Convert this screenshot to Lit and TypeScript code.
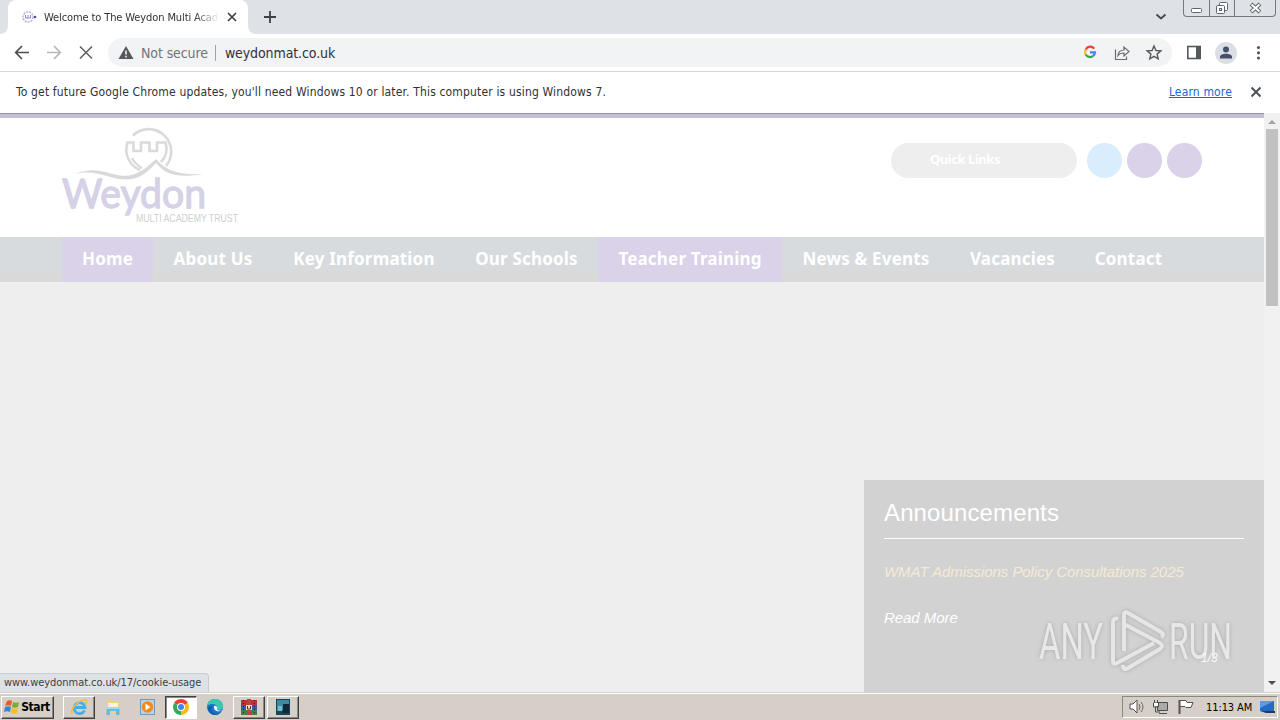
import { LitElement, html, css, svg } from 'lit';
import { customElement } from 'lit/decorators.js';
import { classMap } from 'lit/directives/class-map.js';
import { styleMap } from 'lit/directives/style-map.js';

const chromeLogo = svg`
  <circle cx="10" cy="10" r="8" fill="#fff"/>
  <path d="M10 10 3.100 6A8 8 0 0 1 16.900 6Z" fill="#ea4335"/>
  <path d="M10 10 16.900 6A8 8 0 0 1 10 18Z" fill="#fbbc04"/>
  <path d="M10 10 10 18A8 8 0 0 1 3.100 6Z" fill="#34a853"/>
  <circle cx="10" cy="10" r="4" fill="#fff"/>
  <circle cx="10" cy="10" r="3" fill="#4285f4"/>`;

@customElement('browser-chrome')
export class BrowserChrome extends LitElement {
  static styles = css`
    :host {
      display: block;
      font-family: "DejaVu Sans Condensed", "DejaVu Sans", sans-serif;
      font-stretch: condensed;
      color: #303134;
    }
    svg {
      display: block;
      fill: none;
      flex: none;
    }
    .tabs {
      display: flex;
      height: 34px;
      background: #dee1e6;
      align-items: flex-start;
    }
    .corner {
      width: 8px;
      height: 34px;
      background: #fff;
    }
    .corner div {
      height: 34px;
      background: #dee1e6;
    }
    .corner.left div {
      border-bottom-right-radius: 8px;
    }
    .corner.right div {
      border-bottom-left-radius: 8px;
    }
    .tab {
      box-sizing: border-box;
      width: 240px;
      height: 34px;
      padding: 0 8px 0 14px;
      display: flex;
      align-items: center;
      background: #fff;
      border-radius: 8px 8px 0 0;
    }
    .title {
      width: 175px;
      margin-left: 6px;
      overflow: hidden;
      white-space: nowrap;
      font-size: 11px;
      letter-spacing: -0.11px;
      -webkit-mask-image: linear-gradient(90deg, #000 150px, transparent 175px);
      mask-image: linear-gradient(90deg, #000 150px, transparent 175px);
    }
    .tab .close {
      margin-left: 5px;
    }
    .plus {
      margin: 11px 0 0 7px;
    }
    .chevron {
      margin: 13px 16px 0 auto;
    }
    .window {
      box-sizing: border-box;
      display: flex;
      width: 93px;
      height: 17px;
      margin-right: 4px;
      border: 1px solid #75797f;
      border-top: 0;
      border-radius: 0 0 4px 4px;
      overflow: hidden;
    }
    .window svg + svg {
      border-left: 1px solid #75797f;
    }
    .toolbar {
      box-sizing: border-box;
      display: flex;
      align-items: center;
      height: 38px;
      padding: 0 12px;
      background: #fff;
      border-bottom: 1px solid #d5d7da;
    }
    .toolbar > svg + svg {
      margin-left: 12px;
    }
    .toolbar > .panel + svg,
    .toolbar > .avatar + svg {
      margin-left: 11px;
    }
    .omnibox {
      box-sizing: border-box;
      flex: 1;
      display: flex;
      align-items: center;
      height: 29px;
      margin: 0 12px;
      padding: 0 8px;
      background: #f1f3f4;
      border-radius: 15px;
      font-size: 14px;
    }
    .omnibox .state {
      margin-left: 5px;
      color: #70757a;
      letter-spacing: -0.1px;
      white-space: nowrap;
    }
    .omnibox .bar {
      width: 1px;
      height: 16px;
      margin: 0 9px 0 7px;
      background: #a0a3a7;
    }
    .omnibox .url {
      flex: 1;
      letter-spacing: -0.1px;
    }
    .tools {
      display: flex;
      gap: 12px;
    }
    .infobar {
      box-sizing: border-box;
      display: flex;
      align-items: center;
      height: 41px;
      padding: 0 16px 2px;
      background: #fff;
      font-size: 12px;
      letter-spacing: 0.16px;
    }
    .infobar span {
      flex: 1;
    }
    .infobar a {
      color: #1967d2;
      text-decoration: underline;
      margin-right: 16px;
    }
  `;

  render() {
    return html`
      <div class="tabs">
        <div class="corner left"><div></div></div>
        <div class="tab">
          <svg width="16" height="16">
            <circle cx="6" cy="8" r="5" stroke="#b7b2dc" stroke-width="1.500" stroke-dasharray="2 1"/>
            <path d="M3.500 6v3h5V6M6 6v3" stroke="#8d87c8"/>
            <circle cx="13" cy="8" r="1.300" fill="#5347a0"/>
          </svg>
          <div class="title">Welcome to The Weydon Multi Academy Trust</div>
          <svg class="close" width="16" height="16"><path d="m4 4 8 8m0-8-8 8" stroke="#3c4043" stroke-width="1.700"/></svg>
        </div>
        <div class="corner right"><div></div></div>
        <svg class="plus" width="14" height="12"><path d="M7 0v12M1 6h12" stroke="#3c4043" stroke-width="1.800"/></svg>
        <svg class="chevron" width="12" height="8"><path d="m1.500 1.500 4.500 4 4.500-4" stroke="#45484d" stroke-width="1.800"/></svg>
        <div class="window">
          <svg width="25" height="17"><rect x="7.500" y="8.500" width="10" height="4" rx="1" fill="#fff" stroke="#606469"/></svg>
          <svg width="24" height="17">
            <rect x="9.500" y="2.500" width="8" height="8" rx="1" fill="#fff" stroke="#606469"/>
            <rect x="6.500" y="5.500" width="8" height="8" rx="1" fill="#fff" stroke="#606469"/>
            <rect x="9.500" y="8.500" width="2" height="2" stroke="#606469"/>
          </svg>
          <svg width="41" height="17">
            <path d="m16 4 9 8m0-8-9 8" stroke="#606469" stroke-width="4"/>
            <path d="m16.500 4.500 8 7m0-7-8 7" stroke="#fff" stroke-width="2"/>
          </svg>
        </div>
      </div>
      <div class="toolbar">
        <svg width="20" height="20"><path d="M17 9.500H4m6-6.500L3.700 9.500 10 16" stroke="#4b4e52" stroke-width="1.700"/></svg>
        <svg width="20" height="20"><path d="M3 9.500h13M10 3l6.300 6.500L10 16" stroke="#b5b7ba" stroke-width="1.700"/></svg>
        <svg width="20" height="20"><path d="m4 3.500 12 12m0-12-12 12" stroke="#5f6368" stroke-width="1.600"/></svg>
        <div class="omnibox">
          <svg width="20" height="18"><path d="M10 2 17.500 15h-15Z" fill="#55585d"/><path d="M10 6.500v4m0 1.300v1.700" stroke="#f1f3f4" stroke-width="1.600"/></svg>
          <span class="state">Not secure</span>
          <div class="bar"></div>
          <span class="url">weydonmat.co.uk</span>
          <div class="tools">
            <svg width="20" height="20">
              <g stroke-width="2.200">
                <path d="M14.200 5.600A5 5 0 0 0 5.700 6.600" stroke="#ea4335"/>
                <path d="M5.700 6.600a5 5 0 0 0 0 5" stroke="#fbbc04"/>
                <path d="M5.700 11.500a5 5 0 0 0 7.500 1.400" stroke="#34a853"/>
                <path d="M13.200 12.900A5 5 0 0 0 15 9.300H10" stroke="#4285f4"/>
              </g>
            </svg>
            <svg width="20" height="20"><path d="M3.500 6.500v10h11v-3M6 12.500c.4-4 3-5.500 6-5.500V4l5 4.500-5 4.500v-3c-3 0-4.700.7-6 2.500Z" stroke="#686c70" stroke-width="1.200"/></svg>
            <svg width="20" height="20"><path d="m10 3 1.900 4.500 4.900.4-3.700 3.200 1.100 4.800L10 13.400l-4.200 2.500 1.100-4.800-3.700-3.200 4.900-.4Z" stroke="#55595e" stroke-width="1.400"/></svg>
          </div>
        </div>
        <svg class="panel" width="20" height="20"><rect x="3.800" y="3.500" width="12.400" height="12" stroke="#55585d" stroke-width="1.600"/><path d="M12 3.500h4.500v12H12Z" fill="#55585d"/></svg>
        <svg class="avatar" width="22" height="22"><circle cx="11" cy="11" r="11" fill="#dbdfe5"/><circle cx="11" cy="7.600" r="3" fill="#44506a"/><path d="M5 16.500v-1.800c0-4 12-4 12 0v1.800Z" fill="#44506a"/></svg>
        <svg width="20" height="20"><g fill="#55585d"><circle cx="10.500" cy="4.500" r="1.600"/><circle cx="10.500" cy="9.800" r="1.600"/><circle cx="10.500" cy="15" r="1.600"/></g></svg>
      </div>
      <div class="infobar">
        <span>To get future Google Chrome updates, you'll need Windows 10 or later. This computer is using Windows 7.</span>
        <a>Learn more</a>
        <svg width="16" height="16"><path d="m3.500 3.500 9 9m0-9-9 9" stroke="#4b4e52" stroke-width="1.900"/></svg>
      </div>
    `;
  }
}

@customElement('school-site')
export class SchoolSite extends LitElement {
  menu = [
    { label: 'Home', width: 91, lilac: true },
    { label: 'About Us', width: 120 },
    { label: 'Key Information', width: 182 },
    { label: 'Our Schools', width: 143 },
    { label: 'Teacher Training', width: 184, lilac: true },
    { label: 'News & Events', width: 168 },
    { label: 'Vacancies', width: 125 },
    { label: 'Contact', width: 107 },
  ];

  static styles = css`
    :host {
      display: flex;
      position: relative;
      height: 579px;
      font-family: "Liberation Sans", Arial, sans-serif;
    }
    .page {
      width: 1264px;
      display: flex;
      flex-direction: column;
      background: #eee;
    }
    .stripe {
      box-sizing: border-box;
      height: 5px;
      background: #c3c0d6;
      border-top: 1px solid #9290ae;
    }
    header {
      box-sizing: border-box;
      height: 119px;
      padding: 0 62px;
      display: flex;
      justify-content: space-between;
      background: #fff;
    }
    .logo {
      display: block;
      margin-top: 6px;
      overflow: visible;
    }
    .links {
      display: flex;
      gap: 5px;
      padding-top: 25px;
    }
    .quick {
      box-sizing: border-box;
      width: 186px;
      height: 35px;
      margin-right: 5px;
      padding-left: 39px;
      border-radius: 18px;
      background: #eee;
      color: #fff;
      font: bold 13px/33px "Noto Sans", sans-serif;
      letter-spacing: -0.45px;
    }
    .dot {
      width: 35px;
      height: 35px;
      border-radius: 50%;
      background: #d9d2e9;
    }
    .dot.blue {
      background: #d9edfc;
    }
    nav {
      display: flex;
      height: 45px;
      padding-left: 62px;
      background: linear-gradient(#d8dbde 34px, #d9d9d9 34px);
    }
    nav div {
      text-align: center;
      color: #fff;
      font: bold 17px/44px "Noto Sans", sans-serif;
      letter-spacing: 0.18px;
      white-space: nowrap;
    }
    .lilac {
      background: #d9d2e9;
    }
    .news {
      box-sizing: border-box;
      width: 400px;
      height: 212px;
      margin: auto 0 0 auto;
      padding: 18px 20px 0;
      background: #d2d2d2;
      color: #fff;
    }
    h2 {
      margin: 0 0 26px;
      height: 40px;
      border-bottom: 1px solid #fff;
      font-size: 24px;
      font-weight: normal;
      line-height: 30px;
      letter-spacing: 0.12px;
    }
    .news p {
      margin: 0 0 32px;
      height: 14px;
      font-size: 15px;
      line-height: 14px;
      font-style: italic;
      letter-spacing: -0.05px;
    }
    .news .policy {
      color: #f5ead4;
    }
    .scroll {
      width: 16px;
      display: flex;
      flex-direction: column;
      align-items: center;
      background: #f1f1f1;
    }
    .scroll svg {
      display: block;
      flex: none;
    }
    .thumb {
      width: 12px;
      height: 177px;
      background: #c1c1c1;
      margin-bottom: auto;
    }
    .status {
      position: absolute;
      left: 0;
      bottom: 0;
      box-sizing: border-box;
      width: 209px;
      height: 19px;
      padding-left: 4px;
      border: 1px solid #c9ccd0;
      border-left: 0;
      border-bottom: 0;
      border-top-right-radius: 4px;
      background: #dee1e6;
      color: #3c4043;
      font: 11px/18px "DejaVu Sans Condensed", "DejaVu Sans", sans-serif;
      font-stretch: condensed;
      letter-spacing: -0.05px;
    }
    .watermark {
      position: absolute;
      left: 1030px;
      top: 489px;
      overflow: visible;
    }
    .glow {
      filter: drop-shadow(0 0 2px #aaa);
    }
  `;

  render() {
    return html`
      <div class="page">
        <div class="stripe"></div>
        <header>
          <svg class="logo" width="180" height="104" fill="none">
            <g stroke="#dadada" stroke-width="2.600">
              <path d="M71 11.500A22.500 22.500 0 0 1 104 42"/>
              <path d="M78 46A22 22 0 0 1 65.500 18.500H71.500V27H79V18.500H87.500V27H95V18.500H103.500A19 19 0 0 1 99 38"/>
              <path d="M70 34q3 6 10 10" stroke-width="2.200"/>
            </g>
            <path d="M12 50.500C32 41 47 50 58 51.500 74 53 82 46 94 35 103 45 113 51 141 50.300 115 54 104 51 94 39 82 52 74 57 57 55 42 52 29 45 12 50.500Z" fill="#d8dada"/>
            <text x="0" y="84" font-family="Lato" font-size="41" fill="#d5d1e6" stroke="#d5d1e6" stroke-width="1.300" textLength="144" lengthAdjust="spacingAndGlyphs">Weydon</text>
            <text x="74" y="98" font-family="Liberation Sans" font-size="11" fill="#d0d0d0" textLength="102" lengthAdjust="spacingAndGlyphs">MULTI ACADEMY TRUST</text>
          </svg>
          <div class="links">
            <div class="quick">Quick Links</div>
            <div class="dot blue"></div>
            <div class="dot"></div>
            <div class="dot"></div>
          </div>
        </header>
        <nav>
          ${this.menu.map(item => html`
            <div class=${classMap({ lilac: !!item.lilac })} style=${styleMap({ width: `${item.width}px` })}>${item.label}</div>
          `)}
        </nav>
        <div class="news">
          <h2>Announcements</h2>
          <p class="policy">WMAT Admissions Policy Consultations 2025</p>
          <p>Read More</p>
        </div>
      </div>
      <div class="scroll">
        <svg width="16" height="16"><path d="M4 11 8 7l4 4Z" fill="#a3a3a3"/></svg>
        <div class="thumb"></div>
        <svg width="16" height="17"><path d="M4 6h8l-4 4Z" fill="#505050"/></svg>
      </div>
      <div class="status">www.weydonmat.co.uk/17/cookie-usage</div>
      <svg class="watermark" width="210" height="80" fill="none">
        <g class="glow">
          <text x="9" y="57" font-family="Roboto" font-size="50" fill="#e8e8e8" textLength="64" lengthAdjust="spacingAndGlyphs">ANY</text>
          <text x="139" y="57" font-family="Roboto" font-size="50" fill="#e8e8e8" textLength="63" lengthAdjust="spacingAndGlyphs">RUN</text>
          <g stroke="#e6e6e6" stroke-width="4" stroke-linejoin="round">
            <path d="M88 17q-5-2-5 4v38q0 4 4 2l37-20"/>
            <path d="M94 49V13q0-4 4-2l33 19q4 3 0 5"/>
            <path d="M94 22l36 19q4 3 0 6L98 66q-5 3-5-3"/>
          </g>
        </g>
        <text x="171" y="60" font-family="Liberation Sans" font-size="12" font-style="italic" fill="#fafafa">1/3</text>
      </svg>
    `;
  }
}

@customElement('task-bar')
export class TaskBar extends LitElement {
  static styles = css`
    :host {
      box-sizing: border-box;
      display: flex;
      align-items: center;
      height: 28px;
      padding: 2px 2px 0 1px;
      background: #d6cfc7;
      box-shadow: inset 0 1px #d6cfc7, inset 0 2px #fff;
      font: 11px "DejaVu Sans Condensed", "DejaVu Sans", sans-serif;
      font-stretch: condensed;
    }
    svg {
      display: block;
      flex: none;
    }
    .button {
      box-sizing: border-box;
      height: 23px;
      display: flex;
      align-items: center;
      justify-content: center;
      border: 1px solid;
      border-color: #fff #404040 #404040 #fff;
      box-shadow: inset -1px -1px #8c8780;
    }
    .start {
      width: 53px;
      margin-right: 9px;
      padding-right: 2px;
      font-weight: bold;
      font-size: 12px;
      letter-spacing: -0.4px;
    }
    .apps {
      display: flex;
      flex: 1;
      gap: 2px;
    }
    .app {
      width: 32px;
    }
    .flat {
      border-color: transparent;
      box-shadow: none;
    }
    .pressed {
      background: #fff;
      border-color: #404040 #fff #fff #404040;
      box-shadow: inset 1px 1px #8c8780;
    }
    .tray {
      box-sizing: border-box;
      width: 156px;
      height: 22px;
      display: flex;
      align-items: center;
      border: 1px solid;
      border-color: #8c8780 #fff #fff #8c8780;
      padding-left: 4px;
    }
    .tray svg {
      margin-right: 4px;
    }
    .tray span {
      margin: 0 7px 0 7px;
      white-space: nowrap;
      letter-spacing: -0.1px;
    }
    .tray .desktop {
      margin: 0;
    }
  `;

  apps = [
    {
      kind: '',
      icon: svg`<path d="M15.500 13.500a5.500 5.500 0 1 1 .5-3H5.500" stroke="#45aee6" stroke-width="2.800"/><path d="M3.500 16.500C-.5 14.500 9 3 16 3c3 0 1 4 0 5" stroke="#e9bd45" stroke-width="1.500"/>`,
    },
    {
      kind: 'flat',
      icon: svg`<path d="M4 3h5l1.500 2H16v11H4Z" fill="#efd27c"/><path d="M5 6h10v5H5Z" fill="#faf3cf"/><path d="M3 10h14v2.500H3Z" fill="#a6d7ee"/><path d="M3.500 12v6H7v-4h6v4h3.500v-6" fill="#6cb9df"/>`,
    },
    {
      kind: 'flat',
      icon: svg`<rect x="3.500" y="2.500" width="14" height="15" fill="#b5d4ea" stroke="#6c9cc3"/><circle cx="10.500" cy="10" r="5.700" fill="#f08a18"/><path d="m8.500 6.500 5 3.500-5 3.500Z" fill="#fff"/>`,
    },
    { kind: 'pressed', icon: chromeLogo },
    {
      kind: 'flat',
      icon: svg`<circle cx="10" cy="10" r="8" fill="#1673c5"/><path d="M2 9C3 1 16-1 18 8c1 5-4 6-6 4 2-4-5-7-10-3Z" fill="#3dc7b0"/><path d="M7 10c-3 5 3 8 8 6-4 4-11 1-12-4 0-2 2-4 4-2Z" fill="#105aa7"/><path d="M9 9c3-1 4 2 3 3 1 2 3 2 5 1-3 3-9 1-8-4Z" fill="#eef6fa"/>`,
    },
    {
      kind: '',
      icon: svg`<path d="M2 3h7v5H2Zm9 0h7v5h-7Z" fill="#bb3038"/><path d="M2 8h16v5H2Z" fill="#3a57ad"/><path d="M2 13h7v5H2Zm9 0h7v5h-7Z" fill="#3b8348"/><path d="M8 2h4v16H8Z" fill="#c3403a"/><path d="M7 8h6v5H7Z" fill="#f0dfb2"/><path d="M8.500 9v3h3V9" stroke="#4b3825"/><path d="M4.500 3v15m11-15v15" stroke="#2d2830" stroke-dasharray="1 2"/>`,
    },
    {
      kind: '',
      icon: svg`<path d="M3 2h14v16H3Z" fill="#154658"/><path d="M4 3h12v6L8 14H4Z" fill="#3c8ba3"/><path d="M5 9h4v5H5Z" fill="#79b9c8"/><path d="M10 7h6v9h-6Z" fill="#0c2a38"/>`,
    },
  ];

  render() {
    return html`
      <div class="button start">
        <svg width="18" height="18">
          <path d="M4 3c2-1 4-1 5 0L8 8C6 7 4 7 2 8Z" fill="#e65b28"/>
          <path d="M10 4c2 1 4 1 6 0l-1 5c-2 1-4 1-6 0Z" fill="#76af31"/>
          <path d="M2 9c2-1 4-1 6 0l-1 5c-2-1-4-1-6 0Z" fill="#3985d0"/>
          <path d="M9 10c2 1 4 1 6 0l-1 5c-2 1-4 1-6 0Z" fill="#f4bd29"/>
        </svg>
        Start
      </div>
      <div class="apps">
        ${this.apps.map(app => html`
          <div class="button app ${app.kind}"><svg width="20" height="20" fill="none">${app.icon}</svg></div>
        `)}
      </div>
      <div class="tray">
        <svg width="20" height="18" fill="none"><path d="M3 6h3l4-4v13l-4-4H3Z" fill="#fff" stroke="#56534f"/><path d="M12 6q2 3 0 6m2-8q4 5 0 10" stroke="#6a6763"/></svg>
        <svg width="20" height="18" fill="none"><path d="M6.500 4.500h10v8h-10Z" fill="#aaa" stroke="#4d4d4d"/><path d="M8 15.500h8M3.500 2v3m3-3v3m-4 0h5v4h-5Zm2 4v5H9" stroke="#4d4d4d"/><path d="M3 5h4v3H3Z" fill="#fff"/></svg>
        <svg width="20" height="18" fill="none"><path d="M4.500 2v14" stroke="#56534f" stroke-width="2"/><path d="M5 2.500h6l1 2h6l-2 5h-5l-1-1H5Z" fill="#fff" stroke="#56534f"/></svg>
        <span>11:13 AM</span>
        <svg class="desktop" width="17" height="16"><path d="M1 2h14v10H1Z" fill="#266ac4"/><path d="M1 2h14L1 9Z" fill="#5c9ae6"/><path d="M1 12h15v2H7Z" fill="#203a6c"/></svg>
      </div>
    `;
  }
}

@customElement('app-root')
export class AppRoot extends LitElement {
  static styles = css`
    :host {
      display: flex;
      flex-direction: column;
      width: 1280px;
      height: 720px;
      overflow: hidden;
    }
  `;

  render() {
    return html`
      <browser-chrome></browser-chrome>
      <school-site></school-site>
      <task-bar></task-bar>
    `;
  }
}
